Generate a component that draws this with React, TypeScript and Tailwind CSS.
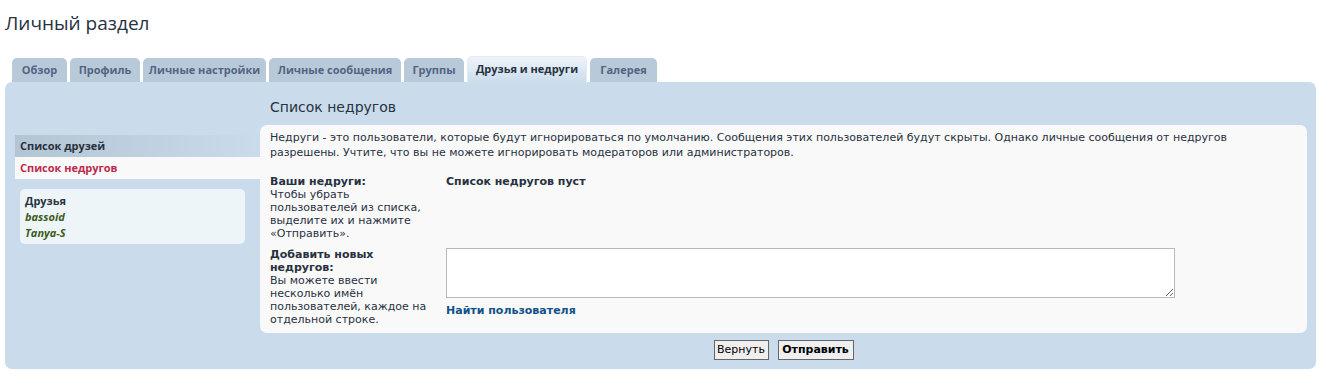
const tabs = [
  { label: 'Обзор', w: 'w-[55px]' },
  { label: 'Профиль', w: 'w-[70px]' },
  { label: 'Личные настройки', w: 'w-[123px]' },
  { label: 'Личные сообщения', w: 'w-[132px]' },
  { label: 'Группы', w: 'w-[60px]' },
  { label: 'Друзья и недруги', w: 'w-[120px]', active: true },
  { label: 'Галерея', w: 'w-[67px]' },
]

const friends = ['bassoid', 'Tanya-S']

export default function App() {
  return (
    <div className="min-h-screen bg-white font-['DejaVu_Sans',Verdana,sans-serif] text-[#28313F]">
      {/* Page title */}
      <h2 className="pl-[5px] pt-[11px] font-['Open_Sans',sans-serif] text-[19px] leading-[25px] text-[#28313F]">
        Личный раздел
      </h2>

      {/* Tabs */}
      <div className="mt-[20px] flex h-[26px] items-end gap-[3px] pl-[12px]">
        {tabs.map((tab) =>
          tab.active ? (
            <div
              key={tab.label}
              className={`${tab.w} relative z-10 -mb-[1px] flex h-[27px] items-center justify-center rounded-t-[5px] border border-b-0 border-[#E3EDF6] bg-gradient-to-b from-[#EEF4FA] to-[#CADCEB] pb-[1px] font-['Open_Sans',sans-serif] text-[11px] font-bold text-[#28313F]`}
            >
              {tab.label}
            </div>
          ) : (
            <div
              key={tab.label}
              className={`${tab.w} flex h-[24px] items-center justify-center rounded-t-[5px] bg-[#B8CADA] font-['Open_Sans',sans-serif] text-[11px] font-bold text-[#536482]`}
            >
              {tab.label}
            </div>
          )
        )}
      </div>

      {/* Panel */}
      <div className="ml-[5px] mr-[15px] flex rounded-[7px] bg-[#CADCEB] pb-[9px] pl-[10px] pr-[9px]">
        {/* Sidebar */}
        <div className="w-[245px] shrink-0 pt-[53px]">
          <div className="flex h-[22px] items-center bg-gradient-to-r from-[#B3C4D3] to-[#CADCEB] pl-[5px] font-['Open_Sans',sans-serif] text-[11px] font-bold text-[#28313F]">
            Список друзей
          </div>
          <div className="flex h-[22px] items-center bg-[#F9F9F9] pl-[5px] font-['Open_Sans',sans-serif] text-[11px] font-bold text-[#BC2A4D]">
            Список недругов
          </div>
          <div className="ml-[5px] mt-[10px] h-[55px] w-[225px] rounded-[5px] bg-[#EEF5F9] px-[5px] pt-[4px] font-['Open_Sans',sans-serif] text-[11px] font-bold leading-[16px]">
            <div className="text-[#28313F]">Друзья</div>
            {friends.map((name) => (
              <div key={name} className="italic text-[#3C5A19]">
                {name}
              </div>
            ))}
          </div>
        </div>

        {/* Main */}
        <div className="flex-1 pt-[17px]">
          <h2 className="pl-[10px] text-[14px] leading-[17px] text-[#28313F]">Список недругов</h2>

          <div className="mt-[9px] rounded-[7px] bg-[#F9F9F9] px-[10px] pb-[7px] pt-[5px] text-[11px]">
            <p className="leading-[15px]">
              Недруги - это пользователи, которые будут игнорироваться по умолчанию. Сообщения этих пользователей будут скрыты. Однако личные сообщения от недругов разрешены. Учтите, что вы не можете игнорировать модераторов или администраторов.
            </p>

            <div className="mt-[15px] flex leading-[13px]">
              <div className="w-[176px] shrink-0 pr-[14px]">
                <div className="font-bold">Ваши недруги:</div>
                Чтобы убрать пользователей из списка, выделите их и нажмите «Отправить».
              </div>
              <div className="font-bold">Список недругов пуст</div>
            </div>

            <div className="mt-[8px] flex leading-[13px]">
              <div className="w-[176px] shrink-0 pr-[14px]">
                <div className="font-bold">Добавить новых недругов:</div>
                Вы можете ввести несколько имён пользователей, каждое на отдельной строке.
              </div>
              <div>
                <textarea className="block h-[50px] w-[729px] border border-[#B4BAC0] bg-white" />
                <a href="#" className="mt-[6px] block font-bold text-[#105289]">
                  Найти пользователя
                </a>
              </div>
            </div>
          </div>

          <div className="mt-[7px] flex justify-center gap-[9px]">
            <button className="h-[20px] w-[55px] border border-[#666] bg-[#EFEFEF] text-[11px] text-[#000]">
              Вернуть
            </button>
            <button className="h-[20px] w-[76px] border border-[#666] bg-[#EFEFEF] text-[11px] font-bold text-[#000]">
              Отправить
            </button>
          </div>
        </div>
      </div>
    </div>
  )
}
